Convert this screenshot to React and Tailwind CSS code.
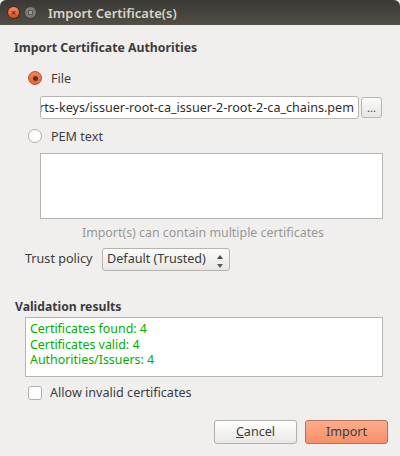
export default function App() {
  return (
    <div className="w-[400px] h-[456px] overflow-hidden bg-[#f0efee] text-[12.6px] leading-[16px] text-[#3c3c3c] font-['Noto_Sans','Open_Sans',sans-serif]">
      <div className="h-[25px] flex items-center pl-[7px] rounded-t-[6px] bg-gradient-to-b from-[#3a3935] to-[#504e45]">
        <div className="w-[13px] h-[13px] rounded-full bg-gradient-to-b from-[#f58a5e] to-[#d9481c] border border-[#3a2a20] flex items-center justify-center text-[9px] leading-none text-[#4a2010]">×</div>
        <div className="ml-[4px] w-[13px] h-[13px] rounded-full bg-[#7c7a72] border border-[#3a3935] flex items-center justify-center">
          <div className="w-[5px] h-[5px] bg-[#9a988f] border border-[#5c5a53]"></div>
        </div>
        <div className="ml-[11px] font-semibold text-[13px] text-[#d9d6c9]">Import Certificate(s)</div>
      </div>

      <div className="pt-[15px] pl-[14px] font-bold text-[12.3px] text-[#3c3c3c]">Import Certificate Authorities</div>

      <div className="mt-[15px] pl-[28px] flex items-center h-[14px]">
        <div className="w-[14px] h-[14px] rounded-full border border-[#b5512c] bg-gradient-to-b from-[#f0845a] to-[#e0673a] flex items-center justify-center">
          <div className="w-[5px] h-[5px] rounded-full bg-[#6e2a12]"></div>
        </div>
        <span className="ml-[9px] mt-[2px]">File</span>
      </div>

      <div className="mt-[11px] pl-[40px] flex items-center">
        <div className="w-[319px] h-[23px] rounded-[3px] border border-[#b8b5b0] bg-white overflow-hidden flex items-center justify-end pr-[4px]">
          <span className="whitespace-nowrap text-[#2e2e2e]">certs-keys/issuer-root-ca_issuer-2-root-2-ca_chains.pem</span>
        </div>
        <div className="ml-[2px] w-[21px] h-[21px] rounded-[3px] border border-[#b8b5b0] bg-gradient-to-b from-[#fbfbfa] to-[#e6e5e3] flex items-center justify-center text-[11px]">...</div>
      </div>

      <div className="mt-[10px] pl-[28px] flex items-center h-[14px]">
        <div className="w-[14px] h-[14px] rounded-full border border-[#b1aeaa] bg-white"></div>
        <span className="ml-[9px] mt-[2px]">PEM text</span>
      </div>

      <div className="mt-[10px] ml-[40px] w-[343px] h-[66px] border border-[#b8b5b0] bg-white"></div>

      <div className="mt-[6px] ml-[40px] w-[326px] text-center text-[12.4px] text-[#9a9894]">Import(s) can contain multiple certificates</div>

      <div className="mt-[7px] pl-[25px] flex items-center">
        <span className="w-[77px] mb-[2px]">Trust policy</span>
        <div className="w-[128px] h-[23px] rounded-[3px] border border-[#b8b5b0] bg-gradient-to-b from-[#fbfbfa] to-[#e8e7e5] flex items-center pl-[4px]">
          <span className="whitespace-nowrap flex-1 mb-[2px]">Default (Trusted)</span>
          <svg width="8" height="14" viewBox="0 0 8 14" className="mr-[5px] mt-[4px]">
            <path d="M4 0 L7 4 L1 4 Z" fill="#4a4a4a" />
            <path d="M1 9 L7 9 L4 13 Z" fill="#5a5a5a" />
          </svg>
        </div>
      </div>

      <div className="mt-[28px] pl-[15px] font-bold text-[12.2px]">Validation results</div>

      <div className="mt-[2px] ml-[25px] w-[358px] h-[60px] border border-[#b8b5b0] bg-white pl-[4px] pt-[3px] text-[12.4px] text-[#00b000] leading-[15.5px]">
        <div>Certificates found: 4</div>
        <div>Certificates valid: 4</div>
        <div>Authorities/Issuers: 4</div>
      </div>

      <div className="mt-[9px] pl-[28px] flex items-center h-[14px]">
        <div className="w-[14px] h-[14px] rounded-[3px] border border-[#b1aeaa] bg-white"></div>
        <span className="ml-[8px]">Allow invalid certificates</span>
      </div>

      <div className="mt-[20px] pr-[12px] flex justify-end gap-[8px]">
        <div className="w-[83px] h-[24px] rounded-[3px] border border-[#b3b0ab] bg-gradient-to-b from-[#ffffff] to-[#e8e7e5] flex items-center justify-center">
          <span><span className="underline">C</span>ancel</span>
        </div>
        <div className="w-[83px] h-[24px] rounded-[3px] border border-[#b5715a] bg-gradient-to-b from-[#fdab8c] to-[#f79068] flex items-center justify-center">Import</div>
      </div>
    </div>
  );
}
